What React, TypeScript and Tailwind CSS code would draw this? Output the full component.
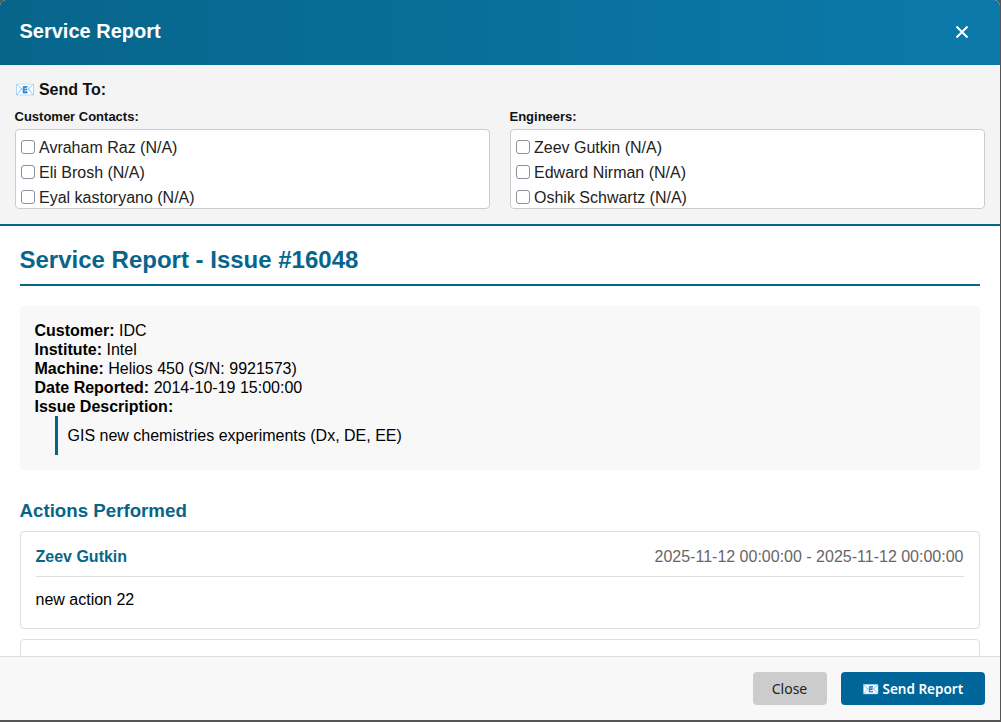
const customers = ['Avraham Raz (N/A)', 'Eli Brosh (N/A)', 'Eyal kastoryano (N/A)'];
const engineers = ['Zeev Gutkin (N/A)', 'Edward Nirman (N/A)', 'Oshik Schwartz (N/A)'];

function RecipientList({ title, names }: { title: string; names: string[] }) {
  return (
    <div>
      <div className="mb-[5px] text-[13px] leading-[15px] font-bold text-[#111]">{title}</div>
      <div className="h-[80px] overflow-hidden rounded border border-[#ccc] bg-white px-[5px] pt-[5px]">
        {names.map((name) => (
          <label key={name} className="flex h-[25px] items-center text-[16px] text-[#222]">
            <input type="checkbox" className="mr-[4.5px] mb-[1px] h-[14px] w-[14px] appearance-none rounded-[3px] border border-[#8f8f9d] bg-white" />
            {name}
          </label>
        ))}
      </div>
    </div>
  );
}

export default function App() {
  return (
    <div className="h-[722px] w-[1001px] overflow-hidden bg-[#555] font-['Liberation_Sans',sans-serif]">
      <div className="-ml-[0.5px] flex h-[720px] w-[1000px] flex-col overflow-hidden rounded-t-md bg-white">
        <div className="flex h-[65px] shrink-0 items-center justify-between bg-gradient-to-r from-[#07658a] to-[#0b7aab] pr-[31px] pl-[20px]">
          <h2 className="mb-[3px] text-[20px] font-bold text-white">Service Report</h2>
          <svg className="mb-[2px]" width="14" height="14" viewBox="0 0 14 14" fill="none" stroke="white" strokeWidth="2">
            <path d="M1.5 1.5l11 11M12.5 1.5l-11 11" />
          </svg>
        </div>

        <div className="shrink-0 border-b-2 border-[#07658a] bg-[#f4f4f4] px-[15px] pt-[15px] pb-[15px]">
          <div className="mb-[9px] text-[16px] leading-[20px] font-bold text-[#111]">📧 Send To:</div>
          <div className="grid grid-cols-2 gap-[20px]">
            <RecipientList title="Customer Contacts:" names={customers} />
            <RecipientList title="Engineers:" names={engineers} />
          </div>
        </div>

        <div className="min-h-0 flex-1 overflow-hidden px-[20px] pt-[20px]">
          <h1 className="border-b-2 border-[#07658a] pb-[10px] text-[24px] leading-[28px] font-bold text-[#07658a]">
            Service Report - Issue #16048
          </h1>

          <div className="mt-[20px] rounded bg-[#f8f8f8] px-[15px] pt-[15px] pb-[15px] text-[16px] leading-[19px] text-black">
            <div><b>Customer:</b> IDC</div>
            <div><b>Institute:</b> Intel</div>
            <div><b>Machine:</b> Helios 450 (S/N: 9921573)</div>
            <div><b>Date Reported:</b> 2014-10-19 15:00:00</div>
            <div><b>Issue Description:</b></div>
            <div className="ml-[20px] border-l-[3px] border-[#07658a] py-[10px] pl-[10px]">
              GIS new chemistries experiments (Dx, DE, EE)
            </div>
          </div>

          <h3 className="mt-[30px] mb-[9px] text-[18.72px] leading-[22px] font-bold text-[#07658a]">Actions Performed</h3>

          <div className="rounded border border-[#ddd] bg-white px-[15px] pt-[16px]">
            <div className="flex items-center justify-between border-b border-[#ddd] pb-[10px] leading-[18px]">
              <span className="font-bold text-[#07658a]">Zeev Gutkin</span>
              <span className="text-[#666]">2025-11-12 00:00:00 - 2025-11-12 00:00:00</span>
            </div>
            <p className="pt-[14px] pb-[19px] leading-[18px] text-black">new action 22</p>
          </div>
          <div className="mt-[10px] h-[40px] rounded border border-[#ddd] bg-white"></div>
        </div>

        <div className="flex h-[64px] shrink-0 items-center justify-end gap-[14px] border-t border-[#ddd] bg-[#f8f8f8] pr-[15px] font-['Noto_Sans',sans-serif] text-[14px]">
          <button className="h-[33px] w-[74px] rounded bg-[#ccc] text-[#222]">Close</button>
          <button className="h-[33px] w-[144px] rounded bg-[#006699] font-semibold text-white">
            📧 <span className="text-[13.5px]">Send Report</span>
          </button>
        </div>
      </div>
    </div>
  );
}
